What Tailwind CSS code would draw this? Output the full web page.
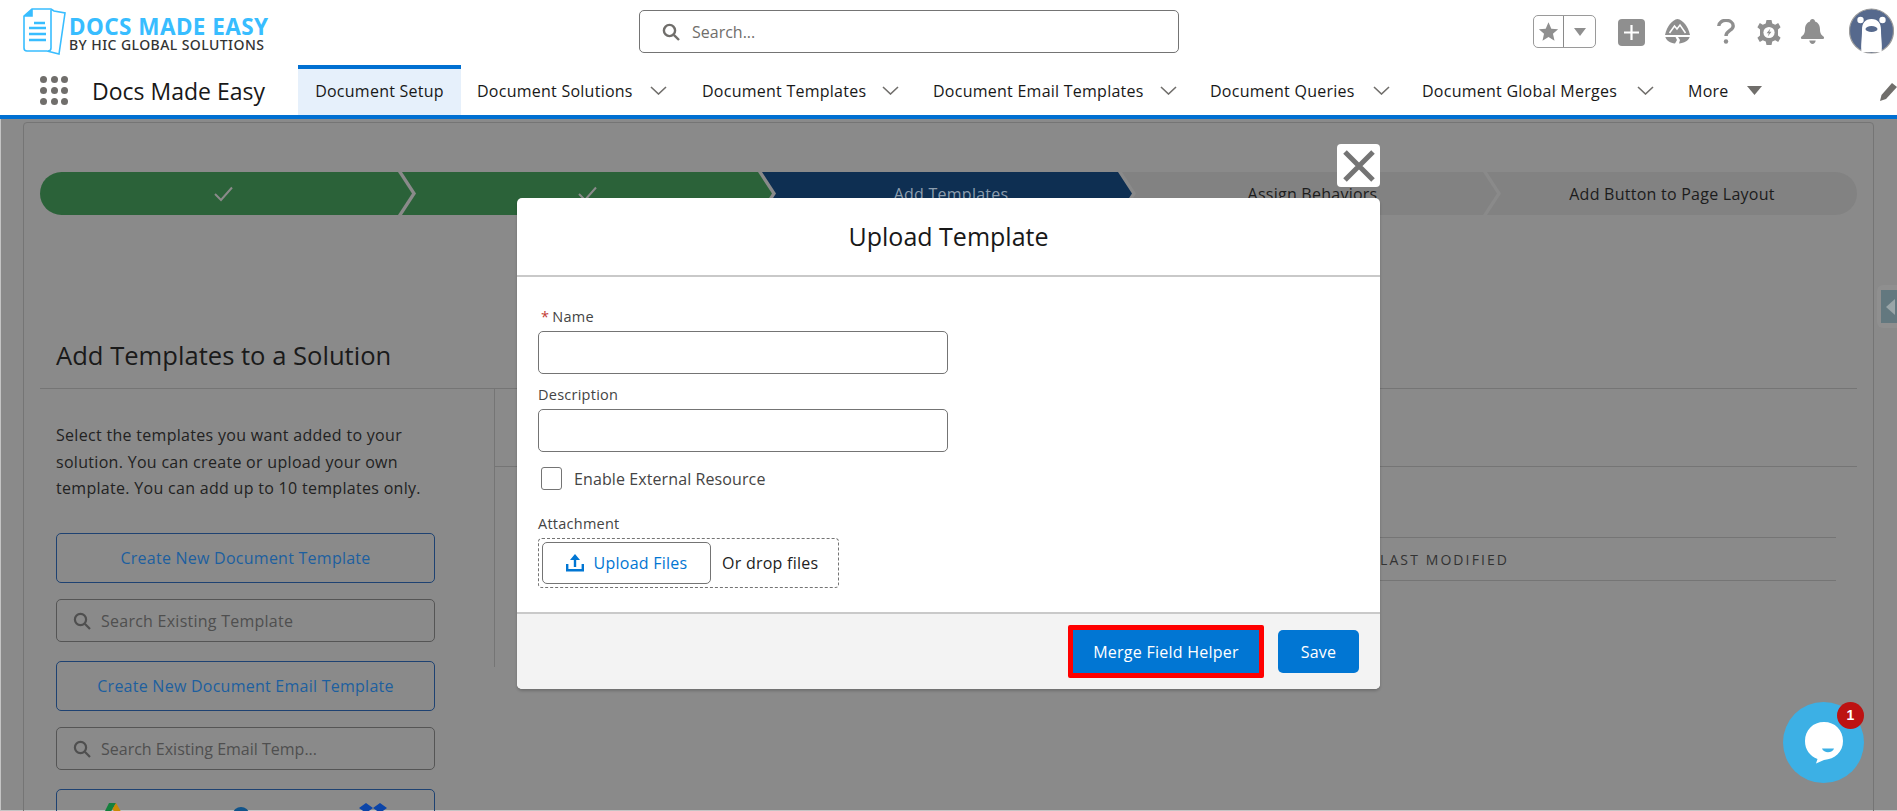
<!DOCTYPE html>
<html lang="en">
<head>
  <meta charset="UTF-8" />
  <title>Docs Made Easy</title>
  <script src="https://cdn.jsdelivr.net/npm/@tailwindcss/browser@4"></script>
</head>
<body class="relative h-[811px] w-[1897px] overflow-hidden bg-white font-['Open_Sans','Noto_Sans',sans-serif] text-[16px] tracking-[0.25px] text-[#181818]">

  <!-- top bar -->
  <header class="flex h-[65px] items-start">
    <div class="ml-[23px] flex h-[65px] w-[616px] items-start">
      <svg class="mt-[8px] h-[47px] w-[43px]" viewBox="0 0 43 47" fill="none" stroke="#38bdff" stroke-width="1.6">
        <path d="M1 8 L9 1 H28 L31 3 L42 5 L36 46 L24 43 H4 Q1 43 1 40 Z" />
        <path d="M28 2 V40 Q28 43 25 43" />
        <path d="M9 1 V8 H1" fill="#38bdff" />
        <path d="M11 15 H22 M6 20 H23 M6 26 H23 M6 32 H23" stroke-width="2.6" />
      </svg>
      <div class="ml-[3px] mt-[17px] flex flex-col">
        <span class="h-[21px] whitespace-nowrap font-['Noto_Sans',sans-serif] text-[22.5px] font-bold leading-[20px] tracking-[0.45px] text-[#38bdff]">DOCS MADE EASY</span>
        <span class="h-[14px] whitespace-nowrap font-['Noto_Sans',sans-serif] text-[14px] font-medium leading-[14px] tracking-[0.43px] text-[#333]">BY HIC GLOBAL SOLUTIONS</span>
      </div>
    </div>
    <div class="mt-[10px] flex h-[43px] w-[540px] items-center rounded-[5px] border border-[#747474] pl-[22px]">
      <svg class="h-[18px] w-[18px]" viewBox="0 0 18 18" fill="none" stroke="#706e6b" stroke-width="2.4"><circle cx="7.5" cy="7.5" r="5.6" /><path d="M11.8 11.8 L17 17" /></svg>
      <span class="ml-[12px] tracking-[0px] text-[#706e6b]">Search...</span>
    </div>
    <div class="ml-[354px] mt-[15px] flex h-[33px] w-[63px] rounded-[5px] border border-[#9a9a9a]">
      <div class="flex w-[30px] items-center justify-center border-r border-[#8a8a8a]">
        <svg class="h-[21px] w-[21px]" viewBox="0 0 24 24" fill="#8f8f8f"><path d="M12 1.5 L15.2 8.8 L23 9.5 L17.1 14.7 L18.9 22.5 L12 18.4 L5.1 22.5 L6.9 14.7 L1 9.5 L8.8 8.8 Z" /></svg>
      </div>
      <div class="flex flex-1 items-center justify-center">
        <svg class="h-[8px] w-[12px]" viewBox="0 0 12 8" fill="#8f8f8f"><path d="M0 0 H12 L6 8 Z" /></svg>
      </div>
    </div>
    <div class="ml-[22px] mt-[19px] flex h-[27px] w-[27px] items-center justify-center rounded-[4px] bg-[#8f8f8f]">
      <svg class="h-[17px] w-[17px]" viewBox="0 0 17 17" stroke="#fff" stroke-width="2.2"><path d="M8.5 1 V16 M1 8.5 H16" /></svg>
    </div>
    <svg class="ml-[20px] mt-[19px] h-[25px] w-[25px]" viewBox="0 0 25 25" fill="#8f8f8f">
      <path d="M12.5 0 C18 1 23 7 25 16 L0 16 C2 7 7 1 12.5 0 Z" />
      <path d="M0.3 18 H10.5 L12 21 L10 24.5 C5 24 2 22 0.3 18 Z M13 18 H24.7 C23 22 19.5 24 14 24.5 L15 21 Z" />
      <path d="M4.5 14 L9.5 7 L12 10 L15 6 L20.5 14" fill="none" stroke="#fff" stroke-width="1.5" />
    </svg>
    <svg class="ml-[27px] mt-[19px] h-[25px] w-[18px]" viewBox="0 0 18 25" fill="none" stroke="#8f8f8f" stroke-width="3.4">
      <path d="M1.8 7 C1.8 -0.5 16.2 -0.5 16.2 7 C16.2 11.5 9 11.5 9 17" />
      <circle cx="9" cy="22.5" r="2.2" fill="#8f8f8f" stroke="none" />
    </svg>
    <svg class="ml-[22px] mt-[20px] h-[25px] w-[24px]" viewBox="0 0 24 25" fill="#8f8f8f">
      <path d="M9.5 0 H14.5 L15.3 3.4 L18.2 4.7 L21.2 3 L23.6 7.2 L21 9.5 V15.5 L23.6 17.8 L21.2 22 L18.2 20.3 L15.3 21.6 L14.5 25 H9.5 L8.7 21.6 L5.8 20.3 L2.8 22 L0.4 17.8 L3 15.5 V9.5 L0.4 7.2 L2.8 3 L5.8 4.7 L8.7 3.4 Z" />
      <circle cx="12" cy="12.5" r="5.6" fill="#fff" />
      <path d="M13.4 8.5 L9.6 13.3 H11.8 L10.8 16.6 L14.5 11.8 H12.3 Z" />
    </svg>
    <svg class="ml-[19px] mt-[19px] h-[25px] w-[25px]" viewBox="0 0 25 25" fill="#8f8f8f">
      <path d="M12.5 0 C14 0 15 1 15 2.4 C18.8 3.6 20 7 20 10.5 C20 14.5 21.5 16 23.5 17.5 C24.5 18.4 24.2 20 23 20 H2 C0.8 20 0.5 18.4 1.5 17.5 C3.5 16 5 14.5 5 10.5 C5 7 6.2 3.6 10 2.4 C10 1 11 0 12.5 0 Z" />
      <path d="M9.3 21.5 H15.7 C15.5 23.6 14 25 12.5 25 C11 25 9.5 23.6 9.3 21.5 Z" />
    </svg>
    <svg class="ml-[24px] mt-[8px] h-[46px] w-[45px]" viewBox="0 0 45 46">
      <circle cx="22.5" cy="23" r="22" fill="#56698d" stroke="#9a9a9a" stroke-width="1.2" />
      <circle cx="11.5" cy="12" r="3.2" fill="#fff" /><circle cx="33.5" cy="12" r="3.2" fill="#fff" />
      <path d="M22.5 11 C29 11 32 15 32 22 C32 31 33.5 37 32.5 44 H12.5 C11.5 37 13 31 13 22 C13 15 16 11 22.5 11 Z" fill="#fff" />
      <ellipse cx="22.5" cy="21" rx="6" ry="3" fill="#56698d" />
    </svg>
  </header>

  <!-- app nav -->
  <nav class="flex h-[54px] items-start border-b-[4px] border-[#0070d2]">
    <div class="ml-[40px] mt-[11px] grid h-[29px] w-[28px] grid-cols-3 gap-x-[4px] gap-y-[4px]">
      <span class="h-[7px] w-[7px] rounded-full bg-[#706e6b]"></span><span class="h-[7px] w-[7px] rounded-full bg-[#706e6b]"></span><span class="h-[7px] w-[7px] rounded-full bg-[#706e6b]"></span>
      <span class="h-[7px] w-[7px] rounded-full bg-[#706e6b]"></span><span class="h-[7px] w-[7px] rounded-full bg-[#706e6b]"></span><span class="h-[7px] w-[7px] rounded-full bg-[#706e6b]"></span>
      <span class="h-[7px] w-[7px] rounded-full bg-[#706e6b]"></span><span class="h-[7px] w-[7px] rounded-full bg-[#706e6b]"></span><span class="h-[7px] w-[7px] rounded-full bg-[#706e6b]"></span>
    </div>
    <div class="ml-[24px] mt-[9px] w-[206px] whitespace-nowrap text-[23px] leading-[34px] tracking-[0px]">Docs Made Easy</div>
    <div class="flex h-[50px] w-[163px] items-center justify-center border-t-[4px] border-[#0070d2] bg-[#e6f0fb] pb-[2px]">Document Setup</div>
    <div class="ml-[16px] flex h-[50px] w-[225px] items-center pt-[1px]"><span class="w-[173px] whitespace-nowrap">Document Solutions</span><svg class="h-[9px] w-[17px]" viewBox="0 0 17 9" fill="none" stroke="#706e6b" stroke-width="1.6"><path d="M1 1 L8.5 8 L16 1" /></svg></div>
    <div class="flex h-[50px] w-[231px] items-center pt-[1px]"><span class="w-[180px] whitespace-nowrap">Document Templates</span><svg class="h-[9px] w-[17px]" viewBox="0 0 17 9" fill="none" stroke="#706e6b" stroke-width="1.6"><path d="M1 1 L8.5 8 L16 1" /></svg></div>
    <div class="flex h-[50px] w-[277px] items-center pt-[1px]"><span class="w-[227px] whitespace-nowrap">Document Email Templates</span><svg class="h-[9px] w-[17px]" viewBox="0 0 17 9" fill="none" stroke="#706e6b" stroke-width="1.6"><path d="M1 1 L8.5 8 L16 1" /></svg></div>
    <div class="flex h-[50px] w-[212px] items-center pt-[1px]"><span class="w-[163px] whitespace-nowrap">Document Queries</span><svg class="h-[9px] w-[17px]" viewBox="0 0 17 9" fill="none" stroke="#706e6b" stroke-width="1.6"><path d="M1 1 L8.5 8 L16 1" /></svg></div>
    <div class="flex h-[50px] w-[266px] items-center pt-[1px]"><span class="w-[215px] whitespace-nowrap">Document Global Merges</span><svg class="h-[9px] w-[17px]" viewBox="0 0 17 9" fill="none" stroke="#706e6b" stroke-width="1.6"><path d="M1 1 L8.5 8 L16 1" /></svg></div>
    <div class="flex h-[50px] w-[192px] items-center pt-[1px]"><span class="w-[59px] whitespace-nowrap">More</span><svg class="h-[9px] w-[15px]" viewBox="0 0 15 9" fill="#706e6b"><path d="M0 0 H15 L7.5 9 Z" /></svg></div>
    <svg class="mt-[18px] h-[18px] w-[17px]" viewBox="0 0 17 18" fill="#706e6b"><path d="M12 0 L17 4 L6 16 L0 18 L1.5 12 Z" /></svg>
  </nav>

  <!-- page behind the modal, dimmed -->
  <main class="h-[692px] border-b border-l border-[#c4c4c4] bg-[#8a8a8a] pt-[3px]">
    <div class="ml-[22px] h-[700px] w-[1851px] overflow-hidden rounded-t-[4px] border border-[#757575] px-[16px] pt-[49px]">
      <div class="flex h-[43px] w-[1817px] text-center">
        <div class="flex w-[372px] items-center justify-center rounded-l-[22px] bg-[#2b6239] pr-[5px] [clip-path:polygon(0_0,calc(100%-14px)_0,100%_50%,calc(100%-14px)_100%,0_100%)]">
          <svg class="h-[16px] w-[19px]" viewBox="0 0 19 16" fill="none" stroke="#8a8a8a" stroke-width="2"><path d="M1 8 L7 14 L18 1.5" /></svg>
        </div>
        <div class="ml-[-10px] flex w-[370px] items-center justify-center bg-[#2b6239] [clip-path:polygon(0_0,calc(100%-14px)_0,100%_50%,calc(100%-14px)_100%,0_100%,14px_50%)]">
          <svg class="h-[16px] w-[19px]" viewBox="0 0 19 16" fill="none" stroke="#8a8a8a" stroke-width="2"><path d="M1 8 L7 14 L18 1.5" /></svg>
        </div>
        <div class="ml-[-10px] flex w-[370px] items-center justify-center bg-[#0e2f52] pl-[8px] text-[#8d9eae] [clip-path:polygon(0_0,calc(100%-14px)_0,100%_50%,calc(100%-14px)_100%,0_100%,14px_50%)]">Add Templates</div>
        <div class="ml-[-10px] flex w-[375px] items-center justify-center bg-[#828282] pl-[6px] text-[#1c1c1c] [clip-path:polygon(0_0,calc(100%-14px)_0,100%_50%,calc(100%-14px)_100%,0_100%,14px_50%)]">Assign Behaviors</div>
        <div class="ml-[-10px] flex flex-1 items-center justify-center rounded-r-[22px] bg-[#828282] text-[#1c1c1c] [clip-path:polygon(0_0,100%_0,100%_100%,0_100%,14px_50%)]">Add Button to Page Layout</div>
      </div>

      <div class="flex h-[174px] items-end border-b border-[#757575] pb-[14px] pl-[16px]">
        <h1 class="whitespace-nowrap text-[25.6px] leading-[36px] tracking-[0px] text-[#1a1a1a]">Add Templates to a Solution</h1>
      </div>

      <div class="flex items-start">
        <div class="w-[454px] pl-[16px] pt-[33px]">
          <p class="h-[80px] w-[372px] leading-[26.5px] tracking-[0.3px] text-[#222]">Select the templates you want added to your solution. You can create or upload your own template. You can add up to 10 templates only.</p>
          <div class="mt-[31px] flex h-[50px] w-[379px] items-center justify-center rounded-[5px] border border-[#1e4272] text-[#1d5f9f]">Create New Document Template</div>
          <div class="mt-[16px] flex h-[43px] w-[379px] items-center rounded-[5px] border border-[#555] pl-[16px] text-[#4f4f4f]">
            <svg class="h-[18px] w-[18px]" viewBox="0 0 18 18" fill="none" stroke="#4f4f4f" stroke-width="2.2"><circle cx="7.5" cy="7.5" r="5.6" /><path d="M11.8 11.8 L17 17" /></svg>
            <span class="ml-[10px]">Search Existing Template</span>
          </div>
          <div class="mt-[19px] flex h-[50px] w-[379px] items-center justify-center rounded-[5px] border border-[#1e4272] text-[#1d5f9f]">Create New Document Email Template</div>
          <div class="mt-[16px] flex h-[43px] w-[379px] items-center rounded-[5px] border border-[#555] pl-[16px] text-[#4f4f4f]">
            <svg class="h-[18px] w-[18px]" viewBox="0 0 18 18" fill="none" stroke="#4f4f4f" stroke-width="2.2"><circle cx="7.5" cy="7.5" r="5.6" /><path d="M11.8 11.8 L17 17" /></svg>
            <span class="ml-[10px] tracking-[0px]">Search Existing Email Temp...</span>
          </div>
          <div class="mt-[19px] flex h-[50px] w-[379px] items-start rounded-[5px] border border-[#1e4272] pt-[13px]">
            <svg class="ml-[46px] h-[20px] w-[20px]" viewBox="0 0 20 20"><path d="M6 0 H13 L6 12 H0 Z" fill="#15803d" /><path d="M13 0 L20 12 H13 L9.5 6 Z" fill="#ca8a04" /></svg>
            <svg class="ml-[108px] mt-[3px] h-[16px] w-[20px]" viewBox="0 0 20 16"><ellipse cx="10" cy="8" rx="8" ry="7" fill="#11548a" /></svg>
            <svg class="ml-[108px] h-[16px] w-[28px]" viewBox="0 0 28 16" fill="#0b44a8"><path d="M7 0 L14 5 L7 10 L0 5 Z M21 0 L28 5 L21 10 L14 5 Z" /></svg>
          </div>
        </div>
        <div class="h-[278px] flex-1 border-l border-[#757575]">
          <div class="h-[78px] border-b border-[#757575]"></div>
          <div class="ml-[60px] mr-[21px] mt-[70px] flex h-[44px] items-center border-y border-[#757575] pl-[825px] text-[14px] tracking-[2.1px] text-[#333]">LAST MODIFIED</div>
        </div>
      </div>
    </div>
  </main>

  <!-- utility side tab -->
  <div class="absolute left-[1877px] top-[285px] h-[43px] w-[20px] rounded-l-[6px] bg-[#8f8f8f] py-[5px] pl-[4px]">
    <div class="flex h-[33px] w-[16px] items-center justify-start bg-[#63787f] pl-[5px]">
      <svg class="h-[16px] w-[9px]" viewBox="0 0 9 16" fill="#9aa5a8"><path d="M9 0 V16 L0 8 Z" /></svg>
    </div>
  </div>

  <!-- modal -->
  <button class="absolute left-[1337px] top-[144px] flex h-[43px] w-[43px] items-center justify-center rounded-[4px] bg-white">
    <svg class="h-[34px] w-[34px]" viewBox="0 0 34 34" stroke="#747474" stroke-width="5"><path d="M3 3 L31 31 M31 3 L3 31" /></svg>
  </button>
  <div class="absolute left-[517px] top-[198px] flex h-[491px] w-[863px] flex-col rounded-[5px] bg-white shadow-[0_2px_3px_rgba(0,0,0,0.2)]">
    <div class="flex h-[79px] items-center justify-center border-b-[2px] border-[#c9c9c9] text-[25px] tracking-[0px] text-[#181818]">Upload Template</div>
    <div class="h-[335px] px-[21px] pt-[30px] text-[14.5px] text-[#444]">
      <div class="h-[24px] leading-[20px]"><span class="ml-[3px] mr-[3px] text-[#c23934]">*</span>Name</div>
      <div class="h-[43px] w-[410px] rounded-[5px] border border-[#747474]"></div>
      <div class="mt-[9px] h-[26px] leading-[24px]">Description</div>
      <div class="h-[43px] w-[410px] rounded-[5px] border border-[#747474]"></div>
      <div class="ml-[3px] mt-[15px] flex h-[23px] items-center text-[16px] tracking-[0.1px]">
        <span class="h-[23px] w-[21px] rounded-[3px] border border-[#747474]"></span>
        <span class="ml-[12px]">Enable External Resource</span>
      </div>
      <div class="mt-[23px] h-[25px] leading-[22px]">Attachment</div>
      <div class="flex h-[50px] w-[301px] items-center rounded-[4px] border border-dashed border-[#747474] pl-[3px]">
        <div class="flex h-[42px] w-[169px] items-center justify-center rounded-[5px] border border-[#747474] text-[16px] text-[#0176d3]">
          <svg class="h-[18px] w-[18px]" viewBox="0 0 18 18" fill="#0176d3"><path d="M9 0 L14 6 H10.2 V13 H7.8 V6 H4 Z" /><path d="M0 10 H2.4 V15 H15.6 V10 H18 V17.5 H0 Z" /></svg>
          <span class="ml-[10px]">Upload Files</span>
        </div>
        <span class="ml-[11px] text-[16px] text-[#222]">Or drop files</span>
      </div>
    </div>
    <div class="flex flex-1 items-center justify-end rounded-b-[5px] border-t-[2px] border-[#c9c9c9] bg-[#f3f3f3] pr-[21px]">
      <div class="flex h-[53px] w-[196px] items-center justify-center rounded-[2px] border-[5px] border-[#ff0000] bg-[#0176d3] text-white">Merge Field Helper</div>
      <div class="ml-[14px] flex h-[43px] w-[81px] items-center justify-center rounded-[5px] bg-[#0176d3] text-white">Save</div>
    </div>
  </div>

  <!-- chat launcher -->
  <div class="absolute left-[1783px] top-[702px] flex h-[81px] w-[81px] items-center justify-center rounded-full bg-[#3cb0e5]">
    <svg class="h-[44px] w-[40px]" viewBox="0 0 40 44">
      <path d="M20 1 C31 1 39 9 39 20 C39 31 31 38 20 39 L12 42.5 L13.5 38 C6 35 1 29 1 20 C1 9 9 1 20 1 Z" fill="#fff" />
      <path d="M18 27.5 H30 C29 32 20 33 18 27.5 Z" fill="#3cb0e5" />
    </svg>
    <span class="absolute left-[54px] top-0 flex h-[27px] w-[27px] items-center justify-center rounded-full bg-[#bd1212] font-['Liberation_Sans',sans-serif] text-[14px] font-bold text-white">1</span>
  </div>
</body>
</html>
